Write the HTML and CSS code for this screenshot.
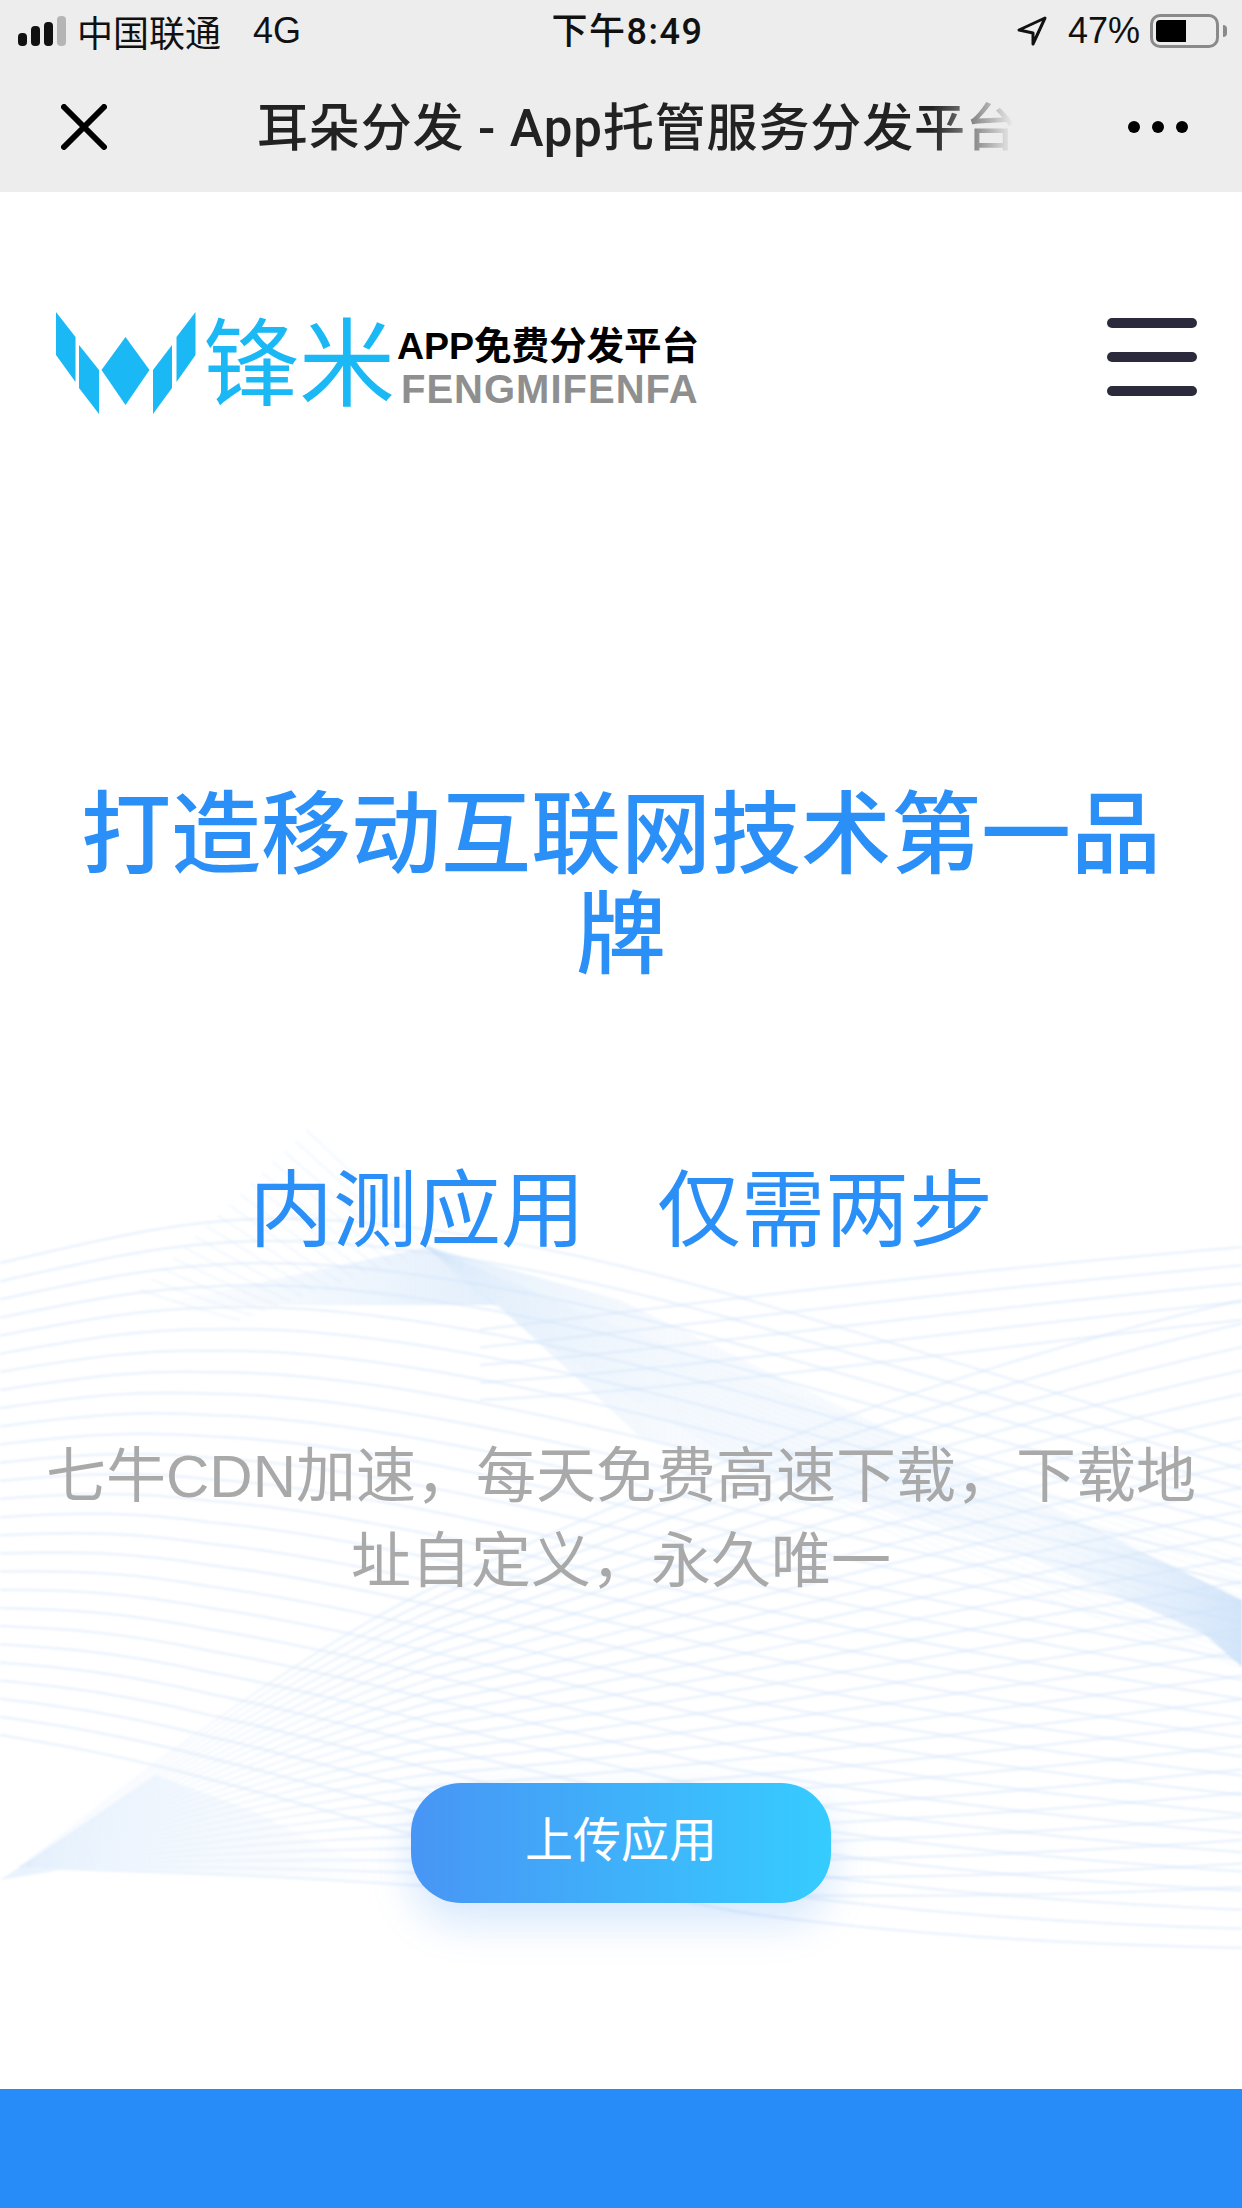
FILE: index.html
```html
<!DOCTYPE HTML>
<html>
<head>
<meta charset="utf-8">
<title>耳朵分发 - App托管服务分发平台</title>
<link rel="stylesheet" href="styles.css">
<script src="waves.js"></script>
</head>

<body>
<div class="page">
	<svg id="waves" class="waves" viewBox="0 1100 1242 950" width="1242" height="950">
		<defs>
			<linearGradient id="fadeL" x1="0" y1="0" x2="1" y2="0">
				<stop offset="0" stop-color="#e3effc" stop-opacity="0"/>
				<stop offset="1" stop-color="#e3effc"/>
			</linearGradient>
			<linearGradient id="fadeR" x1="0" y1="0" x2="1" y2="0">
				<stop offset="0" stop-color="#e3effc"/>
				<stop offset="0.3" stop-color="#eef5fd" stop-opacity=".5"/>
				<stop offset="0.75" stop-color="#e3effc" stop-opacity=".25"/>
				<stop offset="1" stop-color="#d3e5fa"/>
			</linearGradient>
			<linearGradient id="fan" x1="0" y1="0" x2="1" y2="0">
				<stop offset="0" stop-color="#e8f2fd"/>
				<stop offset="1" stop-color="#eef5fd" stop-opacity="0"/>
			</linearGradient>
			<linearGradient id="fanLine" gradientUnits="userSpaceOnUse" x1="20" y1="0" x2="420" y2="0">
				<stop offset="0" stop-color="#cfe2fa" stop-opacity=".08"/>
				<stop offset="1" stop-color="#cfe2fa"/>
			</linearGradient>
		</defs>
		<polygon points="150,1305 428,1247 498,1305" fill="url(#fadeL)"/>
		<polygon points="428,1247 620,1300 1242,1600 1242,1667 1203,1633 1000,1545 640,1437 498,1305" fill="url(#fadeR)"/>
		<polygon points="0,1880 20,1867 155,1775 250,1810 408,1885 245,1877 60,1870" fill="url(#fan)"/>
	</svg>

	<div class="status">
		<div class="status-left">
			<div class="signal"><i class="b1"></i><i class="b2"></i><i class="b3"></i><i class="b4"></i></div>
			<span>中国联通</span>
			<span class="net">4G</span>
		</div>
		<div class="time">下午8:49</div>
		<div class="status-right">
			<svg class="arrow" viewBox="0 0 30 30" width="30" height="30"><path d="M28 2L2 14L16 17L16 28Z" fill="none" stroke="#111" stroke-width="3" stroke-linejoin="round"/></svg>
			<span class="pct">47%</span>
			<div class="battery"><i></i></div>
			<div class="nub"></div>
		</div>
	</div>

	<div class="nav">
		<svg class="close" viewBox="0 0 46 46" width="46" height="46"><path d="M3 3L43 43M43 3L3 43" stroke="#000" stroke-width="6" stroke-linecap="round"/></svg>
		<div class="nav-title">耳朵分发 - App托管服务分发平台</div>
		<div class="dots"><i></i><i></i><i></i></div>
	</div>

	<div class="brand">
		<div class="logo">
			<svg class="logo-mark" viewBox="0 0 141 103" width="141" height="103">
				<g fill="#1ab8f5">
					<polygon points="1,1 20.5,26 20.5,71 1,44"/>
					<polygon points="24,34 44,59 44,103 24,77"/>
					<polygon points="70.5,26 94.5,59 70.5,94 46.5,59"/>
					<polygon points="117,34 98,59 98,103 117,77"/>
					<polygon points="140.5,1 121.5,26 121.5,71 140.5,44"/>
				</g>
			</svg>
			<div class="logo-name">锋米</div>
			<div class="logo-text">
				<div class="logo-cn">APP免费分发平台</div>
				<div class="logo-en">FENGMIFENFA</div>
			</div>
		</div>
		<div class="menu"><i></i><i></i><i></i></div>
	</div>

	<h1 class="title">打造移动互联网技术第一品牌</h1>
	<h2 class="sub"><span>内测应用</span><span>仅需两步</span></h2>
	<p class="desc">七牛CDN加速，每天免费高速下载，下载地址自定义，永久唯一</p>
	<a class="btn" href="javascript:;">上传应用</a>
	<div class="bar"></div>
</div>
</body>
</html>
```

FILE: styles.css
```css
*{padding:0;margin:0;box-sizing:border-box}
html{background:#fff}
html,body{width:1242px;height:2208px;overflow:hidden}
body{font-family:"Liberation Sans","Noto Sans CJK SC",sans-serif}
i{display:block}
.page{position:relative;width:1242px;height:2208px}
.waves{position:absolute;left:0;top:1100px;z-index:-1;filter:blur(.8px)}

.status{display:grid;grid-template-columns:1fr auto 1fr;align-items:center;height:62px;padding:0 15px 0 18px;background:#ededed;font-size:36px;color:#111}
.status-left{display:flex;align-items:center}
.signal{display:flex;align-items:flex-end;gap:4px;height:30px;margin-right:11px}
.signal i{width:9px;border-radius:4px;background:#111}
.signal .b1{height:13px}
.signal .b2{height:20px}
.signal .b3{height:24px}
.signal .b4{height:30px;background:#b5b5b5}
.net{margin-left:32px}
.time{margin:-6px 0 0 10px;font-family:Roboto,"Noto Sans CJK SC",sans-serif;font-weight:500;letter-spacing:1.5px}
.status-right{display:flex;align-items:center;justify-content:flex-end}
.arrow{margin-right:21px}
.pct{margin-right:10px}
.battery{width:69px;height:34px;padding:3px;border:3px solid #8a8a8a;border-radius:10px}
.battery i{width:30px;height:22px;border-radius:4px 0 0 4px;background:#000}
.nub{width:4px;height:12px;margin-left:4px;border-radius:0 4px 4px 0;background:#8a8a8a}

.nav{display:flex;align-items:center;height:130px;padding:0 54px 0 61px;background:#ededed}
.close{flex:none}
.nav-title{flex:1;min-width:0;margin:-6px 95px 0 150px;font-family:Roboto,"Noto Sans CJK SC",sans-serif;font-size:51px;font-weight:500;letter-spacing:.85px;color:#222;white-space:nowrap;-webkit-mask-image:linear-gradient(to right,#000 87%,transparent 97.5%);mask-image:linear-gradient(to right,#000 87%,transparent 97.5%)}
.dots{display:flex;gap:12px}
.dots i{width:12px;height:12px;border-radius:50%;background:#000}

.brand{display:flex;align-items:center;justify-content:space-between;padding:119px 45px 0 55px}
.logo{display:flex;align-items:center}
.logo-name{margin:4px 0 0 7px;font-size:96px;line-height:95px;color:#1ab8f5}
.logo-text{margin-left:2px;margin-top:8px}
.logo-cn{font-size:37.5px;line-height:44px;font-weight:700;color:#000}
.logo-en{margin-left:4px;font-size:40px;line-height:42px;font-weight:700;letter-spacing:1px;color:#8f8f8f}
.menu{display:flex;flex-direction:column;gap:24px;margin-top:-11px}
.menu i{width:90px;height:10px;border-radius:5px;background:#2a2a3c}

.title{margin-top:371px;padding:0 60px;font-size:90px;line-height:100px;font-weight:500;text-align:center;color:#2b8ff8}
.sub{display:flex;justify-content:center;gap:72px;margin-top:176px;font-size:84px;line-height:100px;font-weight:400;color:#2b8ff8}
.desc{margin-top:173px;padding:0 30px;font-size:60px;line-height:85px;text-align:center;color:#a9a9a9}
.btn{display:block;width:420px;height:120px;margin:179px auto 0;border-radius:50px;background:linear-gradient(to right,#4895f5,#36ccff);box-shadow:0 20px 40px rgba(72,149,245,.22);font-size:48px;line-height:116px;text-align:center;color:#fff;text-decoration:none}
.bar{height:120px;margin-top:186px;background:#278bf8}
```

FILE: waves.js
```js
window.onload=function(){
	var oSvg=document.getElementById('waves');

	//每组线：from、to 是两条边界曲线（M + 若干段 C），中间按 n 条插值
	var groups=[
		{n:27,op:.42,stroke:'#cfe2fa',
			from:[0,1263,100,1240,150,1228,212,1222,350,1208,540,1240,739,1297,900,1345,1080,1400,1242,1450],
			to:[0,1735,60,1745,120,1755,212,1780,350,1815,540,1875,739,1912,900,1935,1080,1945,1242,1948]},
		{n:26,op:.42,stroke:'url(#fanLine)',
			from:[20,1867,155,1760,318,1640,449,1580,620,1500,900,1380,1242,1300],
			to:[20,1867,150,1870,300,1878,408,1885,700,1898,1000,1900,1242,1887]},
		{n:5,op:.42,stroke:'#cfe2fa',
			from:[480,1330,640,1310,860,1280,1242,1247],
			to:[480,1400,700,1390,960,1350,1242,1320]},
		{n:16,op:.14,stroke:'#cfe2fa',
			from:[428,1247,640,1340,940,1460,1242,1560],
			to:[428,1247,560,1380,900,1560,1242,1667]},
		{n:16,op:.2,stroke:'#cfe2fa',
			from:[306,1130,350,1170,390,1210,430,1250],
			to:[140,1290,170,1300,200,1310,240,1320]}
	];

	for(var i=0;i<groups.length;i++){
		var g=groups[i];
		for(var j=0;j<g.n;j++){
			var t=j/(g.n-1);
			var p=[];
			for(var k=0;k<g.from.length;k++){
				p.push((g.from[k]+(g.to[k]-g.from[k])*t).toFixed(1));
			}
			var oPath=document.createElementNS('http://www.w3.org/2000/svg','path');
			oPath.setAttribute('d','M'+p[0]+' '+p[1]+'C'+p.slice(2).join(' '));
			oPath.setAttribute('fill','none');
			oPath.setAttribute('stroke',g.stroke);
			oPath.setAttribute('stroke-width','2.5');
			oPath.setAttribute('opacity',g.op);
			oSvg.appendChild(oPath);
		}
	}
};
```
